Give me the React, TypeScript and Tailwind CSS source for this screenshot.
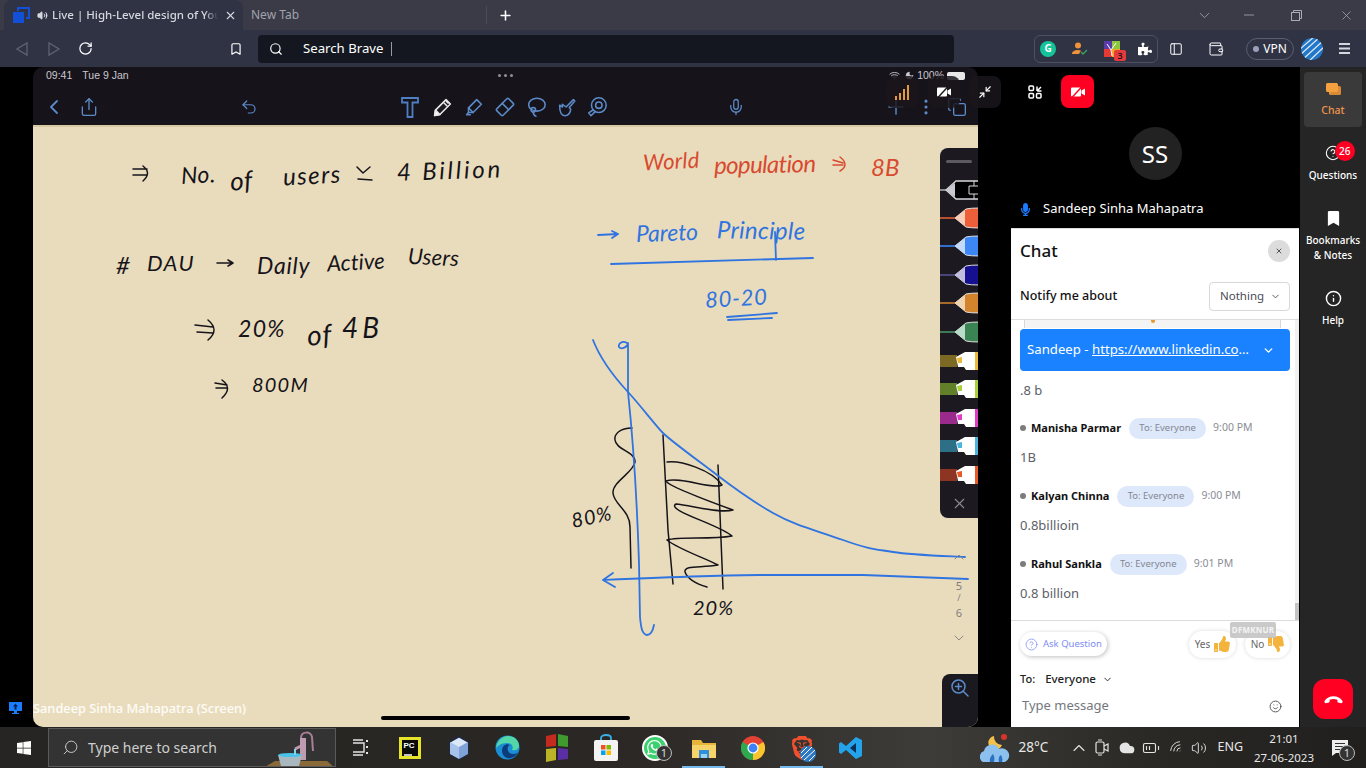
import React from "react";
import {
  X, Plus, ChevronDown, ChevronUp, ChevronLeft, Minus, Search, RotateCw, Bookmark, PanelLeft, Wallet, Share, Undo2, Mic, Copy, MoreVertical, Minimize2, HelpCircle, Info, Smile, Wifi, Moon, Volume2, Cloud, BatteryMedium,
} from "lucide-react";
import { FaWhatsapp, FaThumbsUp, FaThumbsDown, FaPuzzlePiece, FaWindows, FaBookmark, FaMicrophone } from "react-icons/fa";
import { SiBrave } from "react-icons/si";

const sans = { fontFamily: '"Noto Sans", sans-serif' };
const ink = "#16141a";
const red = "#d84a30";
const blue = "#2f74e0";

const notes: [string, number, number, number, string, number, number][] = [
  ["No.", 181, 174, 23, ink, 0.4, -3],
  ["of", 230, 180, 26, ink, 0.6, -4],
  ["users", 283, 175, 24, ink, 1.4, -3],
  ["4 Billion", 397, 170, 24, ink, 2.8, -2],
  ["#", 116, 265, 24, ink, 0, 0],
  ["DAU", 147, 263, 22, ink, 1.4, 0],
  ["Daily", 257, 265, 23, ink, 0.8, 0],
  ["Active", 327, 262, 22, ink, 0.1, -3],
  ["Users", 408, 257, 22, ink, 0.2, 3],
  ["20%", 238, 328, 23, ink, 1.3, 0],
  ["of", 307, 334, 28, ink, 1, -4],
  ["4B", 342, 327, 28, ink, 4, 0],
  ["800M", 252, 384, 20, ink, 1.2, 0],
  ["World", 643, 161, 22, red, 0.2, -3],
  ["population", 714, 164, 24, red, -0.6, -1],
  ["8B", 871, 167, 24, red, 0, 0],
  ["Pareto", 636, 232, 23, blue, 0, -2],
  ["Principle", 717, 230, 24, blue, 0.3, 1],
  ["80-20", 705, 298, 22, blue, 0.8, -3],
  ["80%", 571, 516, 20, ink, 1, -12],
  ["20%", 693, 607, 20, ink, 1, 0],
];

const pens = [
  { y: 190, c: "#000", k: "pen", line: "#8a8a90", tip: "#c9c9cf" },
  { y: 218, c: "#ec5f39", k: "pen", line: "#b8502f", tip: "#f6cdb8" },
  { y: 246, c: "#3d87f5", k: "pen", line: "#2f6fd0", tip: "#c2dafa" },
  { y: 275, c: "#15108f", k: "pen", line: "#4a4578", tip: "#c0bedc" },
  { y: 303, c: "#d4832d", k: "pen", line: "#a86a2a", tip: "#f0d4b0" },
  { y: 332, c: "#3a8353", k: "pen", line: "#3d7a55", tip: "#b8dcc8" },
  { y: 361, c: "#e8b93a", k: "hl", line: "#7c6a24", tip: "#fff" },
  { y: 389, c: "#a8d03c", k: "hl", line: "#62802a", tip: "#fff" },
  { y: 418, c: "#e03cc8", k: "hl", line: "#9a2a8c", tip: "#fff" },
  { y: 446, c: "#4ab4dc", k: "hl", line: "#2d6f86", tip: "#fff" },
  { y: 475, c: "#e65a28", k: "hl", line: "#8e3422", tip: "#fff" },
];

function Notes() {
  return (
    <>
      <svg className="absolute inset-0 w-full h-full" viewBox="33 125 945 602" fill="none" strokeLinecap="round" strokeLinejoin="round">
        <g stroke={ink} strokeWidth="1.5">
          <path d="M133 169L147 169M133 175L147 175M143 166Q152 173 143 181" />
          <path d="M357 167L363 173L370 167M358 179L372 180" />
          <path d="M217 263L233 263M228 260L233 263L228 266" />
          <path d="M195 325L213 327M197 332L213 333M208 320Q220 330 208 340" />
          <path d="M215 383L227 385M216 388L227 388M222 380Q233 388 222 398" />
          <path d="M632 428C620 428 614 434 615 440C616 450 636 452 635 462C634 472 612 482 613 493C614 505 630 510 630 527L631 568" />
          <path d="M663 435L668 530L673 584M718 465L723 589" />
          <path d="M667 462C680 460 712 470 722 485C712 490 680 476 666 481C668 486 700 498 733 510C720 514 690 505 676 504C665 510 720 525 732 536C710 540 680 536 667 540C680 550 705 558 718 565C700 568 684 565 685 572C688 580 700 585 707 587" />
        </g>
        <g stroke={red} strokeWidth="1.5">
          <path d="M833 160L843 163M833 165L843 165M840 157Q850 165 840 171" />
        </g>
        <g stroke={blue} strokeWidth="1.8">
          <path d="M598 235L618 234M612 231L618 234L612 238" />
          <path d="M611 264L813 258M775 232L776 260" />
          <path d="M727 317L777 313M728 320L772 318" />
          <path d="M593 340C600 358 615 378 628 392S655 425 663 433S700 462 717 475S750 500 773 513S815 530 843 540S875 549 893 552S945 556 965 557" />
          <path d="M627 343C622 340 618 344 619 347C621 350 628 347 628 343L628 392C632 430 637 500 639 563L640 617C641 628 642 634 647 635C651 635 653 630 654 625" />
          <path d="M968 579L863 575L760 575C720 575 650 578 603 580M613 573L603 580L615 587" />
        </g>
      </svg>
      {notes.map(([t, x, cy, fs, c, ls, rot], i) => (
        <span
          key={i}
          className="absolute whitespace-nowrap leading-none italic font-normal"
          style={{ left: x - 33, top: cy - 125 - fs / 2, fontSize: fs, color: c, letterSpacing: ls, transform: `rotate(${rot}deg)`, fontFamily: '"Lato", sans-serif' }}
        >
          {t}
        </span>
      ))}
    </>
  );
}

function Palette() {
  return (
    <div className="absolute right-0 top-[23px] w-[38px] h-[370px] bg-[#1c1a20] rounded-l-lg overflow-hidden">
      <div className="absolute left-[6px] top-[12px] w-[26px] h-[3px] rounded bg-[#5c5c60]" />
      <svg className="absolute left-0 top-0" width="38" height="370" viewBox="940 148 38 370">
        {pens.map((p) =>
          p.k === "pen" ? (
            p.c === "#000" ? (
              <g key={p.y}>
                <path d={`M940 ${p.y}H946`} stroke={p.line} strokeWidth="2" />
                <path d={`M946 ${p.y}L956 ${p.y - 9}H980V${p.y + 9}H956Z`} fill="#000" stroke="#d8d8dc" strokeWidth="1.3" />
                <path d={`M946 ${p.y}L955 ${p.y - 7}V${p.y + 7}Z`} fill={p.tip} />
                <path d={`M980 ${p.y - 4}H969V${p.y + 4}H980M974 ${p.y - 9}V${p.y - 4}M974 ${p.y + 4}V${p.y + 9}`} stroke="#d8d8dc" fill="none" />
              </g>
            ) : (
              <g key={p.y}>
                <path d={`M940 ${p.y}H955`} stroke={p.line} strokeWidth="2" />
                <path d={`M955 ${p.y}L966 ${p.y - 9}Q970 ${p.y - 10} 980 ${p.y - 10}V${p.y + 10}Q970 ${p.y + 10} 966 ${p.y + 9}Z`} fill={p.c} stroke="#ddd" strokeWidth="1" />
                <path d={`M955 ${p.y}L965 ${p.y - 8}V${p.y + 8}Z`} fill={p.tip} />
              </g>
            )
          ) : (
            <g key={p.y}>
              <rect x="940" y={p.y - 6} width="17" height="12" fill={p.line} />
              <path d={`M956 ${p.y - 4}L965 ${p.y - 9}H978V${p.y + 9}H966L964 ${p.y + 6}H958Z`} fill={p.tip} />
              <rect x="975" y={p.y - 9} width="3" height="18" fill={p.c} />
              <path d={`M957 ${p.y - 3}L962 ${p.y - 4}V${p.y + 2}H958Z`} fill={p.c} />
            </g>
          ),
        )}
      </svg>
      <X className="absolute left-[11px] top-[347px] text-[#8c8c90]" size={17} strokeWidth={1.5} />
    </div>
  );
}

function CamOff({ slash }: { slash: string }) {
  return (
    <svg width="14" height="12" viewBox="0 0 14 12">
      <rect x="0" y="1.500" width="10" height="9" rx="1" fill="#fff" />
      <path d="M10.500 4.500L14 2.500V9.500L10.500 7.500Z" fill="#fff" />
      <path d="M1 11.500L11 0.500" stroke={slash} strokeWidth="1.4" />
    </svg>
  );
}

function Tile({ children, className }: { children: React.ReactNode; className: string }) {
  return <div className={`absolute top-[9px] w-[32px] h-[32px] rounded-lg bg-[#1a161c]/85 flex items-center justify-center ${className}`}>{children}</div>;
}

function Tool({ children, ml }: { children: React.ReactNode; ml: string }) {
  return (
    <svg className={ml} width="22" height="22" viewBox="0 0 24 24" fill="none" stroke="#5b8ac8" strokeWidth="1.7" strokeLinecap="round" strokeLinejoin="round">
      {children}
    </svg>
  );
}

function Screen() {
  const toolIcon = "text-[#5b8ac8]";
  return (
    <div className="relative h-full rounded-[10px] overflow-hidden flex flex-col bg-[#17131a]">
      <div className="h-[58px] shrink-0 flex flex-col" style={{ fontFamily: '"Liberation Sans", sans-serif' }}>
        <div className="h-[17px] flex items-center pl-[13px] pr-[13px] text-[10.500px] text-[#c9c9cf]">
          <span>09:41</span>
          <span className="ml-[10px]">Tue 9 Jan</span>
          <div className="ml-[369px] flex gap-[2.500px]">
            <span className="w-[3.500px] h-[3.500px] rounded-full bg-[#8f8f95]" />
            <span className="w-[3.500px] h-[3.500px] rounded-full bg-[#8f8f95]" />
            <span className="w-[3.500px] h-[3.500px] rounded-full bg-[#8f8f95]" />
          </div>
          <div className="ml-auto flex items-center gap-[3px]">
            <Wifi size={11} />
            <Moon className="ml-[2px]" size={9} fill="currentColor" />
            <span className="text-[10.500px]">100%</span>
            <div className="w-[18px] h-[8px] bg-[#e8e8e8] rounded-[2px]" />
          </div>
        </div>
        <div className="h-[41px] pt-[5px] relative flex items-center">
          <ChevronLeft className={`ml-[9px] ${toolIcon}`} size={24} strokeWidth={1.8} />
          <Share className={`ml-[13px] ${toolIcon}`} size={20} strokeWidth={1.6} />
          <Undo2 className={`ml-[141px] ${toolIcon}`} size={18} strokeWidth={1.6} />
          <svg className="ml-[143px]" width="18" height="21" viewBox="0 0 18 21" fill="none" stroke="#4d7fc2" strokeWidth="1.8"><path d="M1 1h16v4.500h-5.500V20h-5V5.500H1z" /></svg>
          <svg className="ml-[13px]" width="21" height="21" viewBox="0 0 24 24" fill="#1c1a20" stroke="#e8e8e8" strokeWidth="1.8" strokeLinejoin="round">
            <path d="M16 3l5 5L9 20l-6 1 1-6z" />
            <path d="M3 21l1-6 5 5z" fill="#fff" />
            <path d="M13.500 6.500l4 4M16 4.500l3 3" />
          </svg>
          <Tool ml="ml-[10px]"><path d="M15 4l5 5-9 9H6v-5z" /><path d="M6 13l5 5M6 18l-2 2.500h4" /></Tool>
          <Tool ml="ml-[9px]"><path d="M3 14L14 3a1.500 1.500 0 0 1 2 0l5 5a1.500 1.500 0 0 1 0 2L10 21a1.500 1.500 0 0 1-2 0l-5-5a1.500 1.500 0 0 1 0-2z" /><path d="M9 8l7 7" /></Tool>
          <Tool ml="ml-[9px]"><ellipse cx="13" cy="9.500" rx="9" ry="7" /><circle cx="9" cy="15" r="2.500" /><path d="M9 17.500c0 2 1 4 3 4.500" /></Tool>
          <Tool ml="ml-[9px]"><path d="M4 10l3 2V9l4 3 8-8 1.500 1.500-6 7 1.500 2c0 4-3 7-6 7-4 0-6-4-6-11z" /></Tool>
          <Tool ml="ml-[8px]"><circle cx="14" cy="10" r="8" /><circle cx="14" cy="10" r="3.500" /><path d="M8 15l-5 3.500 2.500 3L10 17" /></Tool>
          <Mic className={`ml-[119px] ${toolIcon}`} size={18} strokeWidth={1.7} />
          <Plus className={`ml-[139px] ${toolIcon}`} size={24} strokeWidth={1.5} />
          <MoreVertical className={`ml-[8px] ${toolIcon}`} size={20} strokeWidth={1.8} />
          <Copy className={`ml-[11px] ${toolIcon}`} size={20} strokeWidth={1.6} />
        </div>
      </div>
      <div className="flex-1 relative bg-[#e9dcbc] shadow-[inset_0_2px_0_#d8c9a5]">
        <Notes />
        <Palette />
        <div className="absolute right-[9px] top-[424px] w-[20px] flex flex-col items-center text-[#7d7d7f] text-[11px] leading-none" style={sans}>
          <ChevronUp size={16} strokeWidth={1.3} />
          <span className="mt-[15px]">5</span>
          <span className="mt-[2px] text-[9px]">/</span>
          <span className="mt-[5px]">6</span>
          <ChevronDown className="mt-[12px]" size={16} strokeWidth={1.3} />
        </div>
        <div className="absolute right-0 bottom-0 w-[36px] h-[53px] bg-[#1b1920] rounded-tl-lg flex justify-center pt-[4px]">
          <svg width="20" height="20" viewBox="0 0 20 20" fill="none" stroke="#5b8ac8" strokeWidth="1.5" strokeLinecap="round"><circle cx="8.500" cy="8.500" r="6.500" /><path d="M13.500 13.500L18 18M8.500 5.500v6M5.500 8.500h6" /></svg>
        </div>
        <div className="absolute left-[348px] bottom-[7px] w-[249px] h-[4px] rounded bg-black" />
      </div>
      <Tile className="left-[853px]">
        <svg width="15" height="15" viewBox="0 0 15 15" fill="#e39a3c"><rect x="0" y="11" width="2" height="4" /><rect x="4" y="8" width="2" height="7" /><rect x="8" y="4" width="2" height="11" /><rect x="12" y="0" width="2" height="15" /></svg>
      </Tile>
      <Tile className="left-[895px]"><CamOff slash="#1a161c" /></Tile>
    </div>
  );
}

function Tab() {
  return (
    <div className="h-[30px] shrink-0 bg-[#3a3b46] flex items-stretch text-[12px] pl-[4px] pr-[10px]" style={sans}>
      <div className="w-[239px] bg-[#2f3344] rounded-t-lg flex items-center pl-[8px] text-[#d5d7de]">
        <svg width="18" height="18" viewBox="0 0 18 18" fill="none" className="shrink-0"><rect x="1" y="6" width="11" height="11" fill="#1250d8" /><path d="M6 5V2h11v10h-3" stroke="#1250d8" strokeWidth="2" /></svg>
        <Volume2 className="ml-[7px] shrink-0" size={11} fill="currentColor" />
        <span className="ml-[4px] w-[166px] whitespace-nowrap font-medium text-[11.500px] [mask-image:linear-gradient(to_right,black_92%,transparent)]">Live | High-Level design of You</span>
        <X className="ml-[6px]" size={13} />
      </div>
      <span className="ml-[8px] self-center text-[#a0a2ad]">New Tab</span>
      <div className="ml-[187px] self-center w-[1px] h-[18px] bg-[#4b4c57]" />
      <Plus className="ml-[11px] self-center text-white" size={15} strokeWidth={2.5} />
      <ChevronDown className="ml-[683px] self-center text-[#9a9ca7]" size={17} strokeWidth={1.3} />
      <Minus className="ml-[28px] self-center text-[#a8aab4]" size={16} strokeWidth={1.2} />
      <svg className="ml-[34px] self-center" width="11" height="11" viewBox="0 0 11 11" fill="none" stroke="#a8aab4"><rect x="0.500" y="2.500" width="8" height="8" /><path d="M2.500 2.500v-2h8v8h-2" /></svg>
      <X className="ml-[37px] self-center text-[#a8aab4]" size={15} strokeWidth={1.2} />
    </div>
  );
}

function Toolbar() {
  return (
    <div className="h-[37px] shrink-0 bg-[#2f3344] flex items-center pl-[14px]" style={sans}>
      <svg width="16" height="16" viewBox="0 0 16 16" fill="none" stroke="#5e6272" strokeWidth="1.3"><path d="M13 2v12L3 8z" /></svg>
      <svg className="ml-[16px]" width="16" height="16" viewBox="0 0 16 16" fill="none" stroke="#5e6272" strokeWidth="1.3"><path d="M3 2v12l10-6z" /></svg>
      <RotateCw className="ml-[16px] text-white" size={15} strokeWidth={2} />
      <Bookmark className="ml-[136px] text-white" size={14} strokeWidth={2} />
      <div className="ml-[15px] w-[696px] h-[28px] bg-[#14171f] rounded flex items-center text-white text-[13.200px]">
        <Search className="ml-[11px]" size={14} strokeWidth={2} />
        <span className="ml-[20px]">Search Brave</span>
        <span className="ml-[8px] w-[1px] h-[14px] bg-[#9a9aa0]" />
      </div>
      <div className="ml-[80px] w-[124px] h-[28px] rounded-md border border-[#4c5062] flex items-center">
        <div className="ml-[5px] w-[16px] h-[16px] rounded-full bg-[#15c39a] flex items-center justify-center text-[10px] font-bold text-white">G</div>
        <svg className="ml-[16px]" width="16" height="14" viewBox="0 0 16 14"><circle cx="6" cy="3.500" r="3" fill="#f0923a" /><path d="M0 12c0-3 3-4 6-4 1 0 2 .2 3 .6L7 12z" fill="#f0923a" /><path d="M9 10l2 2 4-4" stroke="#3aa35f" strokeWidth="1.3" fill="none" /></svg>
        <div className="relative ml-[16px] w-[16px] h-[16px]">
          <svg width="16" height="16" viewBox="0 0 16 16"><rect width="8" height="8" fill="#5a3ba8" /><rect x="8" width="8" height="8" fill="#8cc63f" /><rect y="8" width="8" height="8" fill="#e53935" /><rect x="8" y="8" width="8" height="8" fill="#f5a623" /><path d="M7 9L3 3M7 9L12 2M7 9l1 6" stroke="#fff" strokeWidth="1" /></svg>
          <span className="absolute left-[10px] top-[9px] w-[12px] h-[11px] bg-[#e53b3f] rounded-[2px] text-[9px] leading-[11px] text-center text-[#2b1214] font-semibold">3</span>
        </div>
        <FaPuzzlePiece className="ml-[18px] text-white" size={14} />
      </div>
      <PanelLeft className="ml-[11px] text-white" size={14} strokeWidth={1.7} />
      <Wallet className="ml-[25px] text-white" size={16} strokeWidth={1.5} />
      <div className="ml-[22px] w-[48px] h-[22px] rounded-full border border-[#5a5e70] flex items-center justify-center gap-[4px] text-[12px] text-white">
        <span className="w-[6px] h-[6px] rounded-full bg-[#9aa0ba]" />VPN
      </div>
      <svg className="ml-[7px]" width="22" height="22" viewBox="0 0 22 22"><defs><clipPath id="gl"><circle cx="11" cy="11" r="11" /></clipPath></defs><g clipPath="url(#gl)"><rect width="22" height="22" fill="#2277c9" /><path d="M-2 12L14-2M-2 18L20-2M0 23L24 1M6 25L26 6M12 26L28 12" stroke="#dbe9f6" strokeWidth="1.3" /></g></svg>
      <svg className="ml-[16px]" width="11" height="11" viewBox="0 0 11 11" stroke="#d5d7de" strokeWidth="2"><path d="M0 1h11M0 5.500h11M0 10h11" /></svg>
    </div>
  );
}

function Msg({ name, time, text }: { name: string; time: string; text: string }) {
  return (
    <div className="mt-[18px]">
      <div className="h-[22px] flex items-center">
        <span className="w-[6px] h-[6px] rounded-full bg-[#7c7c7c]" />
        <span className="ml-[5px] text-[11px] font-bold text-[#111]">{name}</span>
        <span className="ml-[8px] w-[77px] h-[21px] rounded-full bg-[#dde8fb] text-[9.500px] text-[#83878f] flex items-center justify-center">To: Everyone</span>
        <span className="ml-[7px] text-[10.500px] text-[#8a8d94]">{time}</span>
      </div>
      <div className="mt-[8px] h-[20px] text-[13px] leading-[20px] text-[#5d6069]">{text}</div>
    </div>
  );
}

function ChatPanel() {
  return (
    <div className="w-[290px] shrink-0 flex flex-col bg-black" style={sans}>
      <div className="h-[161px] shrink-0 flex flex-col text-white">
        <div className="h-[33px] mt-[8px] flex items-center pl-[18px]">
          <svg width="14" height="14" viewBox="0 0 14 14" fill="none" stroke="#fff" strokeWidth="1.5"><rect x="1" y="1" width="4.500" height="4.500" rx="1" /><rect x="1" y="8.500" width="4.500" height="4.500" rx="1" /><rect x="8.500" y="8.500" width="4.500" height="4.500" rx="1" /><path d="M9 6V1.500M9 6h4.500M9 6L13 2" /></svg>
          <div className="ml-[19px] w-[33px] h-[33px] rounded-lg bg-[#ff0022] flex items-center justify-center"><CamOff slash="#ff0022" /></div>
        </div>
        <div className="mx-auto mt-[19px] w-[53px] h-[53px] rounded-full bg-[#222] flex items-center justify-center text-[24px] font-normal">SS</div>
        <div className="mt-[19px] flex items-center h-[20px]">
          <FaMicrophone className="ml-[9px] text-[#1a7cff]" size={13} />
          <span className="ml-[11px] text-[13px]">Sandeep Sinha Mahapatra</span>
        </div>
      </div>
      <div className="flex-1 bg-white ml-[1px] mr-[1px] flex flex-col relative border-t border-[#dcdcdc] min-h-0">
        <div className="h-[44px] flex items-center justify-between pl-[9px] pr-[9px]">
          <span className="text-[17px] font-medium text-[#111]">Chat</span>
          <span className="w-[22px] h-[22px] rounded-full bg-[#dcdcdc] flex items-center justify-center"><X size={8} strokeWidth={3} className="text-[#555]" /></span>
        </div>
        <div className="h-[46px] flex items-center justify-between pl-[9px] pr-[9px]">
          <span className="text-[12.500px] font-medium text-[#111]">Notify me about</span>
          <span className="w-[81px] h-[29px] border border-[#d8d8d8] rounded flex items-center pl-[10px] text-[11.500px] text-[#4b4b55]">Nothing<ChevronDown className="ml-[6px]" size={11} strokeWidth={2} /></span>
        </div>
        <div className="h-[302px] border-y border-[#dcdcdc] flex pl-[9px] relative overflow-hidden">
          <div className="flex-1">
            <div className="absolute left-[13px] right-[18px] top-0 h-[8px] bg-[#f4f4f4] border-x border-[#d8d8d8] flex justify-center"><span className="w-[4px] h-[3px] bg-[#e89a2c] rounded-b-full" /></div>
            <div className="mt-[9px] mr-[5px] h-[42px] rounded bg-[#1a82ff] text-white text-[13.200px] flex items-center pl-[7px]">
              <span className="whitespace-nowrap">Sandeep - <span className="underline">https://www.linkedin.co</span>…</span>
              <ChevronDown className="ml-[13px]" size={13} strokeWidth={2.5} />
            </div>
            <div className="mt-[9px] h-[19px] text-[13px] leading-[20px] text-[#5d6069]">.8 b</div>
            <Msg name="Manisha Parmar" time="9:00 PM" text="1B" />
            <Msg name="Kalyan Chinna" time="9:00 PM" text="0.8billioin" />
            <Msg name="Rahul Sankla" time="9:01 PM" text="0.8 billion" />
          </div>
          <div className="w-[4px] bg-[#f1f1f1] flex flex-col justify-end"><div className="h-[17px] bg-[#c4c4c4]" /></div>
        </div>
        <div className="flex items-center pl-[9px] pr-[9px] h-[46px]">
          <span className="h-[24px] w-[87px] rounded-full shadow-[1px_1px_4px_rgba(0,0,0,0.25)] flex items-center pl-[5px] text-[#7d8cf5] text-[9.500px]"><HelpCircle size={13} strokeWidth={1.4} /><span className="ml-[5px]">Ask Question</span></span>
          <span className="ml-auto h-[27px] w-[47px] rounded-full shadow-[0_0_4px_rgba(0,0,0,0.15)] flex items-center justify-center gap-[4px] text-[10px] text-[#666]">Yes<FaThumbsUp className="text-[#f3b33d]" size={16} /></span>
          <span className="ml-[9px] h-[27px] w-[45px] rounded-full shadow-[0_0_4px_rgba(0,0,0,0.15)] flex items-center justify-center gap-[4px] text-[10px] text-[#666]">No<FaThumbsDown className="text-[#f3b33d]" size={16} /></span>
        </div>
        <div className="h-[24px] flex items-center pl-[9px] text-[11px] font-medium text-[#222]">To:<span className="ml-[10px] text-[11.500px]">Everyone</span><ChevronDown className="ml-[6px]" size={11} strokeWidth={2} /></div>
        <div className="h-[26px] mt-[2px] flex items-center pl-[11px] pr-[17px] text-[13px] text-[#75777e]"><span>Type message</span><Smile className="ml-auto text-[#444]" size={13} strokeWidth={1.6} /></div>
        <span className="absolute left-[219px] top-[393px] w-[46px] h-[16px] bg-[#bdbdbd]/80 rounded-[2px] text-[8px] font-bold tracking-[0.2px] text-white/80 flex items-center justify-center">DFMKNUR</span>
      </div>
    </div>
  );
}

function Side() {
  return (
    <div className="flex-1 bg-[#252525] flex flex-col items-center text-white text-[10px] font-medium leading-[15px] pt-[5px] pb-[8px]" style={sans}>
      <div className="w-[58px] h-[55px] bg-[#3a3a3a] rounded flex flex-col items-center pt-[11px] text-[#f0954a] text-[10.500px]">
        <svg width="15" height="15" viewBox="0 0 15 15" fill="#f5a040"><rect x="3" y="3" width="12" height="9" rx="1.500" fill="#d98a35" /><path d="M1.500 0h9A1.500 1.500 0 0 1 12 1.500v6A1.500 1.500 0 0 1 10.500 9H5l-2 2V9H1.500A1.500 1.500 0 0 1 0 7.500v-6A1.500 1.500 0 0 1 1.500 0z" /></svg>
        <span className="mt-[5px]">Chat</span>
      </div>
      <div className="relative mt-[18px] flex flex-col items-center">
        <HelpCircle size={16} strokeWidth={1.6} />
        <span className="absolute left-[26px] -top-[4px] w-[20px] h-[20px] rounded-full bg-[#ff0022] text-[10px] leading-[20px] text-center">26</span>
        <span className="mt-[7px]">Questions</span>
      </div>
      <FaBookmark className="mt-[28px]" size={15} />
      <span className="mt-[7px]">Bookmarks</span>
      <span>&amp; Notes</span>
      <Info className="mt-[27px]" size={17} strokeWidth={2} />
      <span className="mt-[6px]">Help</span>
      <div className="mt-auto w-[40px] h-[40px] rounded-xl bg-[#ff0022] flex items-center justify-center">
        <svg width="19" height="10" viewBox="0 0 19 10" fill="#fff"><path d="M0.500 7C4 0.500 15 0.500 18.500 7c.4.8-.3 2.300-1.200 2.300l-3.300-.8c-.5-.2-.6-.6-.6-1V5.800c-2.700-1-5.100-1-7.800 0v1.700c0 .4-.1.800-.6 1l-3.300.8C.8 9.300.1 7.800.500 7z" /></svg>
      </div>
    </div>
  );
}

function TaskIcon({ children, active }: { children: React.ReactNode; active?: boolean }) {
  return (
    <div className="relative w-[49px] h-full flex items-center justify-center">
      {children}
      {active && <span className="absolute bottom-0 left-[3px] right-[3px] h-[2px] bg-[#76b9ed]" />}
    </div>
  );
}

function Taskbar() {
  return (
    <div className="h-[41px] shrink-0 flex items-center text-white bg-[linear-gradient(90deg,#262523_0%,#2a2724_45%,#3e3c38_68%,#2a2825_85%,#201f1d_100%)]" style={sans}>
      <div className="w-[48px] flex justify-center"><FaWindows size={16} /></div>
      <div className="w-[288px] h-[39px] bg-[#333] border border-[#5a5a5a] flex items-center overflow-hidden relative text-[14px] text-[#cfcfcf]">
        <Search className="ml-[13px] scale-x-[-1]" size={17} strokeWidth={1.3} />
        <span className="ml-[9px]">Type here to search</span>
        <svg className="absolute right-0 top-0" width="80" height="39" viewBox="0 0 80 39" fill="none">
          <path d="M8 39L20 32H72L80 39Z" fill="#8b6a3a" />
          <path d="M48 9V31" stroke="#c09ab0" strokeWidth="6" />
          <path d="M46 9C46 2 56 2 57 8L58 22" stroke="#a87f97" strokeWidth="2" />
          <path d="M46 17L40 20" stroke="#c09ab0" strokeWidth="3" />
          <path d="M23 26H47L44 37H26Z" fill="#a8b8be" />
          <ellipse cx="35" cy="26" rx="12" ry="2" fill="#49c3e8" />
          <path d="M40 20V26" stroke="#7fd4ee" strokeWidth="2" />
        </svg>
      </div>
      <TaskIcon>
        <svg width="16" height="17" viewBox="0 0 16 17" fill="none" stroke="#e4e4e4" strokeWidth="1.4"><path d="M0 1h10M0 16h10M0 4h11v9H0" /><rect x="13" y="1" width="2" height="2" fill="#e4e4e4" stroke="none" /><rect x="13" y="7" width="2" height="2" fill="#e4e4e4" stroke="none" /><rect x="13" y="13" width="2" height="2" fill="#e4e4e4" stroke="none" /></svg>
      </TaskIcon>
      <TaskIcon>
        <svg width="22" height="22" viewBox="0 0 22 22"><rect width="22" height="22" fill="#e6e32a" /><rect x="3" y="3" width="16" height="16" fill="#0b0b0b" /><path d="M5 18h8" stroke="#fff" strokeWidth="1.500" /><text x="4.500" y="11" fontSize="8" fontWeight="700" fill="#fff" fontFamily="Liberation Sans">PC</text></svg>
      </TaskIcon>
      <TaskIcon>
        <svg width="20" height="24" viewBox="0 0 20 24"><path d="M10 1l9 5v12l-9 5-9-5V6z" fill="#dbe8f8" stroke="#1b2a52" strokeWidth="1.200" /><path d="M10 11v12l-9-5V6z" fill="#a8c3ea" /><path d="M10 11l9-5v12l-9 5z" fill="#7fa3d8" /></svg>
      </TaskIcon>
      <TaskIcon>
        <svg width="25" height="25" viewBox="0 0 25 25"><circle cx="12.500" cy="12.500" r="12" fill="#1a8fd6" /><path d="M1 13C2 5 8 1 13 1c6 0 11 4 11 10 0 3-3 5-7 4 2-3 0-7-5-7C6 8 3 11 1 13z" fill="#53d6a8" /><path d="M7 16c0-5 4-8 8-6-4 1-3 9 3 9 2 0 4-.5 5-2-2 5-7 7-11 6-3-1-5-4-5-7z" fill="#0c3c7a" /></svg>
      </TaskIcon>
      <TaskIcon>
        <svg width="24" height="30" viewBox="0 0 24 30"><path d="M1 3l10-2v12l-10 1z" fill="#c52a1e" /><path d="M13 1l10 2v11l-10-1z" fill="#3f9b2d" /><path d="M1 16l10-1v12l-10 2z" fill="#bcb428" /><path d="M13 15l10 1v10l-10 1z" fill="#5b2fa4" /></svg>
      </TaskIcon>
      <TaskIcon>
        <svg width="24" height="27" viewBox="0 0 24 27"><path d="M7 7V4c0-4 10-4 10 0v3" stroke="#37b0e8" strokeWidth="1.800" fill="none" /><rect y="6" width="24" height="21" rx="2" fill="#f3f3f3" /><rect x="7" y="11" width="4.500" height="4.500" fill="#f25022" /><rect x="12.500" y="11" width="4.500" height="4.500" fill="#7fba00" /><rect x="7" y="16.500" width="4.500" height="4.500" fill="#00a4ef" /><rect x="12.500" y="16.500" width="4.500" height="4.500" fill="#ffb900" /></svg>
      </TaskIcon>
      <TaskIcon>
        <div className="w-[26px] h-[26px] rounded-full bg-[#3bd16f] flex items-center justify-center border-2 border-white"><FaWhatsapp className="text-white" size={17} /></div>
        <span className="absolute left-[26px] top-[18px] w-[16px] h-[16px] rounded-full bg-[#333] border border-[#bbb] text-[11px] leading-[14px] text-center text-[#ddd]">1</span>
      </TaskIcon>
      <TaskIcon active>
        <svg width="24" height="22" viewBox="0 0 24 22"><path d="M0 3h9l2 3h13v15H0z" fill="#e8b53a" /><rect y="8" width="24" height="13" fill="#f8d36a" /><rect x="7" y="13" width="10" height="8" fill="#2f8fd8" /><rect x="9" y="17" width="6" height="4" fill="#9ed0f2" /></svg>
      </TaskIcon>
      <TaskIcon>
        <svg width="24" height="24" viewBox="0 0 24 24"><circle cx="12" cy="12" r="12" fill="#e34133" /><path d="M12 12L22.400 6A12 12 0 0 1 12 24z" fill="#f8c52c" /><path d="M12 12L12 24A12 12 0 0 1 1.600 6z" fill="#2da94f" /><circle cx="12" cy="12" r="5.600" fill="#fff" /><circle cx="12" cy="12" r="4.400" fill="#3b82f6" /></svg>
      </TaskIcon>
      <TaskIcon active>
        <SiBrave size={24} className="text-[#f0502d]" />
        <svg className="absolute left-[23px] top-[19px]" width="16" height="16" viewBox="0 0 16 16"><circle cx="8" cy="8" r="8" fill="#2d78c2" /><path d="M1 7L7 1M1 12L12 1M4 14L15 4M9 15l6-6" stroke="#fff" strokeWidth="1" /></svg>
      </TaskIcon>
      <TaskIcon>
        <svg width="24" height="24" viewBox="0 0 24 24"><path d="M17 1l6 3v16l-6 3L7 14l-5 4-2-1.500V7.500L2 6l5 4z" fill="#23a3ea" /><path d="M17 7v10l-6-5z" fill="#0b2f55" /></svg>
      </TaskIcon>
      <div className="ml-auto flex items-center h-full text-[13.500px] pr-[14px]">
        <svg width="30" height="30" viewBox="0 0 30 30"><path d="M14 3a7 7 0 1 0 8 9 8 8 0 0 1-8-9z" fill="#f3c04a" /><circle cx="24" cy="4" r="3" fill="#d8352a" /><path d="M3 29a6 6 0 0 1 1-11 8 8 0 0 1 15-2 7 7 0 0 1 6 13z" fill="#8cc0ee" /><path d="M10 29c-1-4 2-7 3-8 1 2 2 4 1 8zM19 29c-1-3 0-6 2-7 1 2 2 4 1 7z" fill="#2a72c0" /></svg>
        <span className="ml-[8px] w-[32px] text-[#e8e8e8]">28°C</span>
        <ChevronUp className="ml-[19px] text-[#e4e4e4]" size={20} strokeWidth={1.3} />
        <svg className="ml-[6px]" width="15" height="17" viewBox="0 0 15 17" fill="none" stroke="#e4e4e4" strokeWidth="1.200"><rect x="1" y="3" width="8" height="11" rx="1.500" /><path d="M9 7l4-2v7l-4-2M3 1h4M3 16h4" /></svg>
        <Cloud className="ml-[9px] text-[#e4e4e4]" size={16} fill="#e4e4e4" />
        <BatteryMedium className="ml-[7px] text-[#e4e4e4]" size={18} strokeWidth={1.5} />
        <Wifi className="ml-[9px] text-[#e4e4e4] -rotate-45" size={15} strokeWidth={1.4} />
        <Volume2 className="ml-[7px] text-[#e4e4e4]" size={16} strokeWidth={1.4} />
        <span className="ml-[10px] text-[12.500px] text-[#e8e8e8]">ENG</span>
        <div className="ml-[8px] w-[66px] text-center text-[11.500px] leading-[19px] text-[#e8e8e8]"><div>21:01</div><div>27-06-2023</div></div>
        <div className="relative ml-[11px] w-[24px] flex justify-center">
          <svg width="16" height="16" viewBox="0 0 16 16" fill="#eee"><path d="M0 0h16v13H4l-4 3z" /><path d="M3 3.500h10M3 6.500h10M3 9.500h7" stroke="#333" strokeWidth="1" /></svg>
          <span className="absolute left-[11px] top-[5px] w-[16px] h-[16px] rounded-full bg-[#333] border border-[#bbb] text-[11px] leading-[14px] text-center text-[#ddd]">1</span>
        </div>
      </div>
    </div>
  );
}

export default function App() {
  return (
    <div className="w-[1366px] h-[768px] overflow-hidden flex flex-col">
      <Tab />
      <Toolbar />
      <div className="flex-1 min-h-0 flex bg-black relative">
        <div className="w-[1010px] shrink-0 pl-[33px] pr-[32px] relative">
          <Screen />
          <div className="absolute left-[9px] bottom-[9px] flex items-center" style={sans}>
            <svg width="13" height="12" viewBox="0 0 13 12"><path d="M0 0h13v9H8v2h2v1H3v-1h2V9H0z" fill="#1a7cff" /><path d="M6.500 1.500l2.500 3H7.500v3h-2v-3H4z" fill="#06235a" /></svg>
            <span className="ml-[11px] text-[12.800px] font-medium text-white/90">Sandeep Sinha Mahapatra (Screen)</span>
          </div>
          <div className="absolute left-[969px] top-[9px] w-[32px] h-[32px] rounded-lg bg-[#1a161c]/85 flex items-center justify-center"><Minimize2 className="text-white" size={14} /></div>
        </div>
        <ChatPanel />
        <Side />
      </div>
      <Taskbar />
    </div>
  );
}
